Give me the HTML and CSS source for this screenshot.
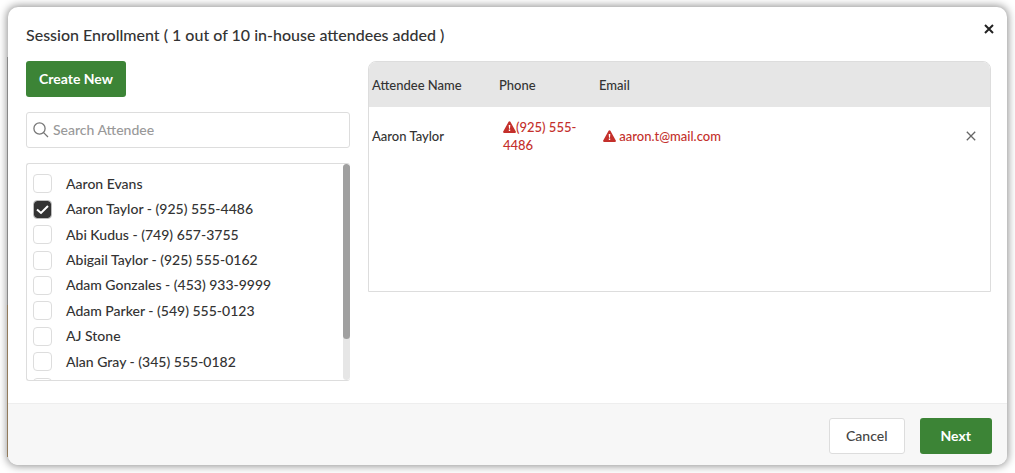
FILE: index.html
```html
<!DOCTYPE html>
<html lang="en">
<head>
	<meta charset="utf-8">
	<title>Session Enrollment</title>
	<link rel="stylesheet" href="styles.css">
</head>
<body>
	<div class="modal" role="dialog" aria-labelledby="modal-title">
		<div class="modal-header">
			<h1 id="modal-title">Session Enrollment ( 1 out of 10 in-house attendees added )</h1>
			<button type="button" class="icon-btn close" aria-label="Close">
				<svg width="10" height="10" viewBox="0 0 10 10"><path d="M1 1l8 8M9 1L1 9"/></svg>
			</button>
		</div>

		<div class="modal-body">
			<div class="picker">
				<button type="button" class="btn btn-primary">Create New</button>

				<div class="search">
					<svg width="16" height="16" viewBox="0 0 16 16"><circle cx="6.5" cy="6.5" r="5.6"/><path d="M10.6 10.6L15 15"/></svg>
					<input type="text" id="search" placeholder="Search Attendee" aria-label="Search Attendee">
				</div>

				<div class="list-box">
					<ul class="list">
						<li><input type="checkbox" id="a1"><label for="a1">Aaron Evans</label></li>
						<li><input type="checkbox" id="a2" checked><label for="a2">Aaron Taylor - (925) 555-4486</label></li>
						<li><input type="checkbox" id="a3"><label for="a3">Abi Kudus - (749) 657-3755</label></li>
						<li><input type="checkbox" id="a4"><label for="a4">Abigail Taylor - (925) 555-0162</label></li>
						<li><input type="checkbox" id="a5"><label for="a5">Adam Gonzales - (453) 933-9999</label></li>
						<li><input type="checkbox" id="a6"><label for="a6">Adam Parker - (549) 555-0123</label></li>
						<li><input type="checkbox" id="a7"><label for="a7">AJ Stone</label></li>
						<li><input type="checkbox" id="a8"><label for="a8">Alan Gray - (345) 555-0182</label></li>
						<li><input type="checkbox" id="a9" aria-label="Attendee"></li>
					</ul>
					<div class="track"><div class="thumb"></div></div>
				</div>
			</div>

			<div class="table-box">
				<table>
					<thead>
						<tr>
							<th class="col-name">Attendee Name</th>
							<th class="col-phone">Phone</th>
							<th>Email</th>
							<th class="col-remove"></th>
						</tr>
					</thead>
					<tbody>
						<tr>
							<td>Aaron Taylor</td>
							<td class="invalid"><svg class="warn" width="13" height="12" viewBox="0 0 13 12"><path d="M6.5.3c.4 0 .7.2.9.5l5.4 9.6c.4.7 0 1.5-.8 1.5H1c-.8 0-1.2-.8-.8-1.5L5.6.8c.2-.3.5-.5.9-.5z"/><path class="mark" d="M5.7 4h1.6L7 7.8H6zM5.8 8.5h1.4v1.4H5.8z"/></svg>(925) 555-4486</td>
							<td class="invalid"><svg class="warn" width="13" height="12" viewBox="0 0 13 12"><path d="M6.5.3c.4 0 .7.2.9.5l5.4 9.6c.4.7 0 1.5-.8 1.5H1c-.8 0-1.2-.8-.8-1.5L5.6.8c.2-.3.5-.5.9-.5z"/><path class="mark" d="M5.7 4h1.6L7 7.8H6zM5.8 8.5h1.4v1.4H5.8z"/></svg> aaron.t@mail.com</td>
							<td class="col-remove">
								<button type="button" class="icon-btn remove" aria-label="Remove Aaron Taylor">
									<svg width="10" height="10" viewBox="0 0 10 10"><path d="M.8.8l8.4 8.4M9.2.8L.8 9.2"/></svg>
								</button>
							</td>
						</tr>
					</tbody>
				</table>
			</div>
		</div>

		<div class="modal-footer">
			<button type="button" class="btn btn-default">Cancel</button>
			<button type="button" class="btn btn-primary btn-next">Next</button>
		</div>
	</div>
</body>
</html>
```
FILE: styles.css
```css
* {
	box-sizing: border-box;
}

body {
	margin: 0;
	padding: 7px 8px 8px;
	min-height: 100vh;
	display: flex;
	background: #fff;
	color: #333;
	font-family: Lato, "Open Sans", sans-serif;
	font-size: 14px;
	font-weight: 500;
	line-height: 18px;
}

button,
input {
	font: inherit;
	color: inherit;
}

svg {
	fill: none;
	stroke: currentColor;
	flex: none;
}

.modal {
	position: relative;
	flex: 1;
	display: flex;
	flex-direction: column;
	border-radius: 10px;
	background: #fff;
	box-shadow: 0 0 8px 1px rgba(0, 0, 0, 0.45);
}

/* thin dark edge on the left side */
.modal::before {
	content: "";
	position: absolute;
	left: -1px;
	top: 50px;
	bottom: 8px;
	width: 1px;
	background: linear-gradient(#888 0 62%, #927b5c 62%);
}

.modal-header {
	display: flex;
	justify-content: space-between;
	padding: 16px 13px 0 18px;
}

.modal-header h1 {
	margin: 0;
	font-size: 16px;
	font-weight: 500;
	line-height: 24px;
}

.icon-btn {
	display: inline-flex;
	padding: 0;
	border: 0;
	background: none;
	cursor: pointer;
}

.close {
	align-self: flex-start;
	padding-top: 1px;
	color: #222;
	stroke-width: 2;
}

.modal-body {
	flex: 1;
	display: grid;
	grid-template-columns: 13fr 25fr;
	align-items: start;
	gap: 18px;
	padding: 14px 16px 21px 18px;
}

.picker {
	display: flex;
	flex-direction: column;
	align-items: stretch;
	gap: 15px;
}

.btn {
	align-self: flex-start;
	height: 36px;
	padding: 0 12px;
	border: 1px solid transparent;
	border-radius: 3px;
	font-weight: 700;
	cursor: pointer;
}

.btn-primary {
	background: #3c8436;
	color: #fff;
}

.btn-default {
	padding: 0 16px;
	border-color: #ddd;
	background: #fff;
	color: #444;
	font-weight: 500;
}

.btn-next {
	padding: 0 20px;
}

.search {
	display: flex;
	align-items: center;
	gap: 4px;
	height: 36px;
	padding: 0 6px;
	border: 1px solid #ddd;
	border-radius: 3px;
	color: #777;
	stroke-width: 1.3;
}

.search input {
	flex: 1;
	min-width: 0;
	padding: 0;
	border: 0;
	outline: 0;
	background: none;
	color: #333;
}

.search input::placeholder {
	color: #999;
	opacity: 1;
}

.list-box {
	display: flex;
	height: 218px;
	overflow: hidden;
	border: 1px solid #ddd;
	border-right: 0;
	border-radius: 3px;
}

.list {
	flex: 1;
	display: grid;
	grid-auto-rows: 1fr;
	height: 229px;
	margin: 7px 0 0;
	padding: 0 6px;
	list-style: none;
}

.list li {
	display: flex;
	align-items: center;
	gap: 14px;
}

.list input {
	appearance: none;
	flex: none;
	width: 19px;
	height: 19px;
	margin: 0;
	border: 1px solid #ddd;
	border-radius: 4px;
	background: #fff;
}

.list input:checked {
	border-color: #bbb;
	background: #333 url("data:image/svg+xml,%3Csvg xmlns='http://www.w3.org/2000/svg' viewBox='0 0 17 17'%3E%3Cpath d='M3 8.5l4 3.5 7-7' fill='none' stroke='white' stroke-width='2'/%3E%3C/svg%3E") center / 17px no-repeat;
	background-clip: padding-box;
}

.track {
	width: 7px;
	border-radius: 4px;
	background: #e6e6e6;
}

.thumb {
	height: 81%;
	border-radius: 4px;
	background: #a0a0a0;
}

.table-box {
	min-height: 231px;
	overflow: hidden;
	border: 1px solid #ddd;
	border-radius: 8px 8px 0 0;
}

table {
	width: 100%;
	table-layout: fixed;
	border-collapse: collapse;
	font-size: 13px;
}

th {
	height: 45px;
	padding: 0 3px;
	background: #e6e6e6;
	font-weight: 500;
	text-align: left;
}

td {
	height: 57px;
	padding: 0 3px;
}

.col-name {
	width: 127px;
}

.col-phone {
	width: 100px;
}

.col-remove {
	width: 40px;
}

td.invalid {
	padding: 0 7px;
	color: #c4302b;
}

.warn {
	fill: #c4302b;
	stroke: none;
	vertical-align: -1px;
}

.warn .mark {
	fill: #fff;
}

.remove {
	margin-left: 13px;
	color: #666;
	stroke-width: 1.3;
}

.modal-footer {
	display: flex;
	justify-content: flex-end;
	gap: 15px;
	padding: 14px 15px 11px;
	border-top: 1px solid #eee;
	border-radius: 0 0 10px 10px;
	background: #f7f7f7;
}
```
